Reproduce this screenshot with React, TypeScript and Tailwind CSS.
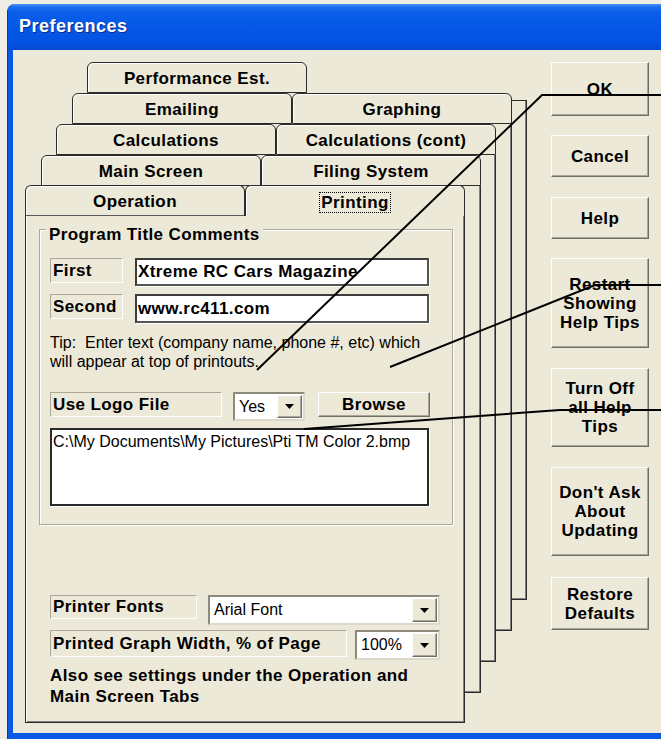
import React from 'react';

const LABEL =
  'flex items-center pl-[2px] border border-t-[#aca899] border-l-[#aca899] border-r-white border-b-white text-[17px] font-bold tracking-[0.4px] shrink-0';
const FIELD =
  'flex items-center bg-white border-2 border-t-[#3c3c3c] border-l-[#3c3c3c] border-r-[#555] border-b-[#555] shadow-[1px_1px_0_#fff] shrink-0';
const RAISED =
  'bg-[#ece9d8] border border-t-white border-l-white border-r-[#716f64] border-b-[#716f64] shadow-[inset_-1px_-1px_0_#aca899]';

function Tab({ label, className = '', focused = false }: { label: string; className?: string; focused?: boolean }) {
  return (
    <div
      className={`w-[220px] h-[31px] shrink-0 flex items-center justify-center pt-[2px] rounded-t-[6px] border border-[#2b2b2b] bg-[#ece9d8] shadow-[inset_1px_1px_0_#fff] text-[17px] font-bold tracking-[0.4px] ${className}`}
    >
      {focused ? <span className="border border-dotted border-black px-[1px] leading-[19px]">{label}</span> : label}
    </div>
  );
}

function Combo({ value, className = '' }: { value: string; className?: string }) {
  return (
    <div
      className={`flex shrink-0 bg-white border-2 border-t-[#8d8a7c] border-l-[#8d8a7c] border-r-[#dcd9cc] border-b-[#dcd9cc] p-[1px] ${className}`}
    >
      <div className="flex-1 flex items-center pl-[3px] text-[16px]">{value}</div>
      <div className={`w-[25px] flex items-center justify-center ${RAISED}`}>
        <svg width="9" height="5" viewBox="0 0 9 5">
          <path d="M0 0h9L4.5 5z" fill="#000" />
        </svg>
      </div>
    </div>
  );
}

function Btn({ children, className = '' }: { children: React.ReactNode; className?: string }) {
  return (
    <div
      className={`flex items-center justify-center text-center text-[17px] leading-[19px] font-bold tracking-[0.4px] shrink-0 ${RAISED} ${className}`}
    >
      <div>{children}</div>
    </div>
  );
}

const BODY =
  'flex-1 bg-[#ece9d8] border-x border-b border-[#2b2b2b] shadow-[inset_1px_0_0_#fff,inset_-1px_-1px_0_#808080]';

export default function App() {
  return (
    <div className="relative w-[661px] h-[739px] overflow-hidden bg-[#eeece3] pl-[7px] pt-[4px] text-black font-['Liberation_Sans',Arial,sans-serif]">
      {/* window frame */}
      <div className="w-[700px] h-[735px] flex flex-col rounded-t-[8px] overflow-hidden bg-[#0b5ae6] border-l border-[#0638b8]">
        <div className="h-[46px] shrink-0 flex items-center pl-[11px] pb-[2px] bg-[linear-gradient(to_bottom,#4a97f8_0%,#1d70f0_6%,#0b5ee9_18%,#0557e6_50%,#0453e2_85%,#0349d0_100%)]">
          <span className="text-white text-[18px] font-bold tracking-[0.5px] [text-shadow:1px_1px_0_#0a2d8a]">Preferences</span>
        </div>

        <div className="flex-1 mr-[6px] ml-[5px] mb-[6px] bg-[#ece9d8] flex pl-[12px] pt-[12px]">
          {/* stacked tab pages */}
          <div className="relative w-[502px] h-[661px] shrink-0">
            <div className="absolute left-[62px] top-0 w-[440px] h-[538px] flex flex-col">
              <div className="flex">
                <Tab label="Performance Est." />
              </div>
              <div className={`${BODY} mt-[7px] border-t`} />
            </div>

            <div className="absolute left-[47px] top-[31px] w-[440px] h-[538px] flex flex-col">
              <div className="flex">
                <Tab label="Emailing" />
                <Tab label="Graphing" />
              </div>
              <div className={BODY} />
            </div>

            <div className="absolute left-[31px] top-[62px] w-[440px] h-[538px] flex flex-col">
              <div className="flex">
                <Tab label="Calculations" />
                <Tab label="Calculations (cont)" />
              </div>
              <div className={BODY} />
            </div>

            <div className="absolute left-[16px] top-[93px] w-[440px] h-[538px] flex flex-col">
              <div className="flex">
                <Tab label="Main Screen" />
                <Tab label="Filing System" />
              </div>
              <div className={BODY} />
            </div>

            {/* front page: Printing */}
            <div className="absolute left-0 top-[123px] w-[440px] h-[538px] flex flex-col">
              <div className="flex">
                <Tab label="Operation" className="border-b-[#5a5a5a]" />
                <Tab label="Printing" focused className="border-b-0 h-[31px]" />
              </div>
              <div className={`${BODY} flex flex-col pl-[13px] pt-[13px]`}>
                <div className="relative w-[414px] h-[296px] shrink-0 border border-[#aca899] shadow-[inset_1px_1px_0_#fff,1px_1px_0_#fff] pl-[10px] pt-[28px]">
                  <span className="absolute left-[6px] top-[-5px] bg-[#ece9d8] px-[3px] text-[17px] leading-[20px] font-bold tracking-[0.4px]">
                    Program Title Comments
                  </span>

                  <div className="flex items-start">
                    <div className={`${LABEL} w-[73px] h-[25px]`}>First</div>
                    <div className={`${FIELD} ml-[12px] w-[294px] h-[28px] pl-[1px] text-[17px] font-bold tracking-[0.4px]`}>
                      Xtreme RC Cars Magazine
                    </div>
                  </div>
                  <div className="flex items-start mt-[8px]">
                    <div className={`${LABEL} w-[73px] h-[25px]`}>Second</div>
                    <div className={`${FIELD} ml-[12px] w-[294px] h-[29px] pl-[1px] text-[17px] font-bold tracking-[0.4px]`}>
                      www.rc411.com
                    </div>
                  </div>

                  <div className="mt-[10px] text-[16px] leading-[19px] whitespace-pre">
                    {'Tip:  Enter text (company name, phone #, etc) which\nwill appear at top of printouts.'}
                  </div>

                  <div className="flex items-start mt-[21px]">
                    <div className={`${LABEL} w-[172px] h-[25px]`}>Use Logo File</div>
                    <Combo value="Yes" className="ml-[11px] w-[72px] h-[29px]" />
                    <Btn className="ml-[13px] w-[112px] h-[25px]">Browse</Btn>
                  </div>

                  <div className="mt-[7px] w-[379px] h-[78px] bg-white border-2 border-[#2a2a2a] shadow-[1px_1px_0_#fff] pl-[1px] pt-[2px] text-[16px] leading-[19px]">
                    {'C:\\My Documents\\My Pictures\\Pti TM Color 2.bmp'}
                  </div>
                </div>

                <div className="pl-[11px] mt-[70px]">
                  <div className="flex items-start">
                    <div className={`${LABEL} w-[147px] h-[24px]`}>Printer Fonts</div>
                    <Combo value="Arial Font" className="ml-[11px] w-[232px] h-[30px]" />
                  </div>
                  <div className="flex items-start mt-[5px]">
                    <div className={`${LABEL} w-[297px] h-[27px]`}>Printed Graph Width, % of Page</div>
                    <Combo value="100%" className="ml-[8px] w-[85px] h-[30px]" />
                  </div>
                  <div className="mt-[5px] text-[17px] leading-[21px] font-bold tracking-[0.4px]">
                    Also see settings under the Operation and
                    <br />
                    Main Screen Tabs
                  </div>
                </div>
              </div>
            </div>
          </div>

          {/* command buttons */}
          <div className="ml-[24px] w-[98px] flex flex-col">
            <Btn className="h-[54px]">OK</Btn>
            <Btn className="mt-[19px] h-[42px]">Cancel</Btn>
            <Btn className="mt-[20px] h-[42px]">Help</Btn>
            <Btn className="mt-[19px] h-[90px]">
              Restart
              <br />
              Showing
              <br />
              Help Tips
            </Btn>
            <Btn className="mt-[20px] h-[79px]">
              Turn Off
              <br />
              all Help
              <br />
              Tips
            </Btn>
            <Btn className="mt-[20px] h-[89px]">
              Don't Ask
              <br />
              About
              <br />
              Updating
            </Btn>
            <Btn className="mt-[21px] h-[53px]">
              Restore
              <br />
              Defaults
            </Btn>
          </div>
        </div>
      </div>

      {/* help callout lines */}
      <svg className="absolute left-0 top-0 pointer-events-none" width="661" height="739">
        <polyline points="661,95 542,95 257,370" fill="none" stroke="#000" strokeWidth="2" />
        <polyline points="661,285 595,285 390,367" fill="none" stroke="#000" strokeWidth="2" />
        <polyline points="661,410 560,410 304,429" fill="none" stroke="#000" strokeWidth="2" />
      </svg>
    </div>
  );
}
